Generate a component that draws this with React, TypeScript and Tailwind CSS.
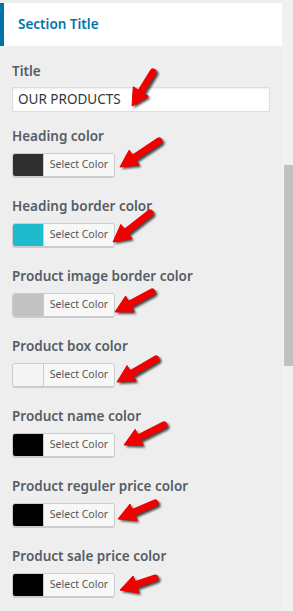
const controls = [
  { label: "Heading color", color: "bg-[#2f2f2f]" },
  { label: "Heading border color", color: "bg-[#1fbacb]" },
  { label: "Product image border color", color: "bg-[#c2c2c2]" },
  { label: "Product box color", color: "bg-[#f4f4f4]" },
  { label: "Product name color", color: "bg-black" },
  { label: "Product reguler price color", color: "bg-black" },
  { label: "Product sale price color", color: "bg-black" },
];

// tip -> tail of each annotation arrow
const arrows: [number, number, number, number][] = [
  [132, 106, 153, 72],
  [120, 167, 159, 141],
  [113, 242, 150, 213],
  [115, 312, 152, 292],
  [117, 382, 156, 359],
  [124, 445, 164, 425],
  [118, 519, 155, 503],
  [120, 590, 155, 578],
];

function arrowShapes(tipX: number, tipY: number, tailX: number, tailY: number) {
  const dx = tailX - tipX;
  const dy = tailY - tipY;
  const len = Math.hypot(dx, dy);
  const ux = dx / len;
  const uy = dy / len;
  const nx = -uy;
  const ny = ux;
  const headLen = 17;
  const headHalf = 9;
  const bx = tipX + ux * headLen;
  const by = tipY + uy * headLen;
  const head = [
    [tipX, tipY],
    [bx + nx * headHalf, by + ny * headHalf],
    [bx - nx * headHalf, by - ny * headHalf],
  ]
    .map((p) => p.join(","))
    .join(" ");
  return { head, sx: bx - ux * 2, sy: by - uy * 2, ex: tailX, ey: tailY };
}

function Arrows() {
  return (
    <svg className="pointer-events-none absolute left-0 top-0" width={293} height={611}>
      <defs>
        <filter id="sh" x="-20%" y="-20%" width="140%" height="140%">
          <feGaussianBlur stdDeviation="1.2" />
        </filter>
      </defs>
      {arrows.map(([a, b, c, d], i) => {
        const s = arrowShapes(a, b, c, d);
        return (
          <g key={i}>
            <g transform="translate(2,2)" filter="url(#sh)" opacity={0.75}>
              <line x1={s.sx} y1={s.sy} x2={s.ex} y2={s.ey} stroke="#111" strokeWidth={7} strokeLinecap="round" />
              <polygon points={s.head} fill="#111" />
            </g>
            <line x1={s.sx} y1={s.sy} x2={s.ex} y2={s.ey} stroke="#f00000" strokeWidth={7} strokeLinecap="round" />
            <polygon points={s.head} fill="#f00000" strokeLinejoin="round" stroke="#f00000" strokeWidth={1} />
          </g>
        );
      })}
    </svg>
  );
}

function ColorButton({ color }: { color: string }) {
  return (
    <div className="mt-[7px] flex h-[24px] w-[103px] overflow-hidden rounded-[3px] border border-[#cccccc] shadow-[0_1px_0_#cccccc]">
      <div className={`w-[30px] ${color}`} />
      <div className="flex flex-1 items-center justify-center border-l border-[#cccccc] bg-[#f7f7f7] text-[10.5px] text-[#555555]">
        Select Color
      </div>
    </div>
  );
}

export default function App() {
  return (
    <div
      className="relative flex h-[611px] w-[293px] overflow-hidden bg-[#f1f1f1]"
      style={{ fontFamily: '"Noto Sans", "Open Sans", sans-serif' }}
    >
      <div className="w-[282px] bg-[#eeeeee] pt-[3px]">
        {/* Section header */}
        <div className="flex h-[43px] items-center border-l-4 border-[#0073aa] bg-white pl-[14px]">
          <span className="text-[13.5px] font-semibold text-[#0073aa]">Section Title</span>
        </div>

        <div className="px-[12px] pt-[15px]">
          <div className="text-[13.5px] font-semibold leading-[20px] text-[#555d66]">Title</div>
          <div className="mt-[6px] flex h-[25px] w-[258px] items-center border border-[#dddddd] bg-white px-[5px] text-[13.5px] text-[#32373c] shadow-[inset_0_1px_2px_rgba(0,0,0,0.07)]">
            OUR PRODUCTS
          </div>

          {controls.map((c) => (
            <div key={c.label} className="mt-[14px] first:mt-[14px] pb-[5px]">
              <div className="text-[13.5px] font-semibold leading-[20px] text-[#555d66]">{c.label}</div>
              <ColorButton color={c.color} />
            </div>
          ))}
        </div>
      </div>

      {/* scrollbar */}
      <div className="flex-1 pl-[2px]">
        <div className="mt-[165px] h-[201px] w-[9px] bg-[#c1c1c1]" />
      </div>

      <Arrows />
    </div>
  );
}
